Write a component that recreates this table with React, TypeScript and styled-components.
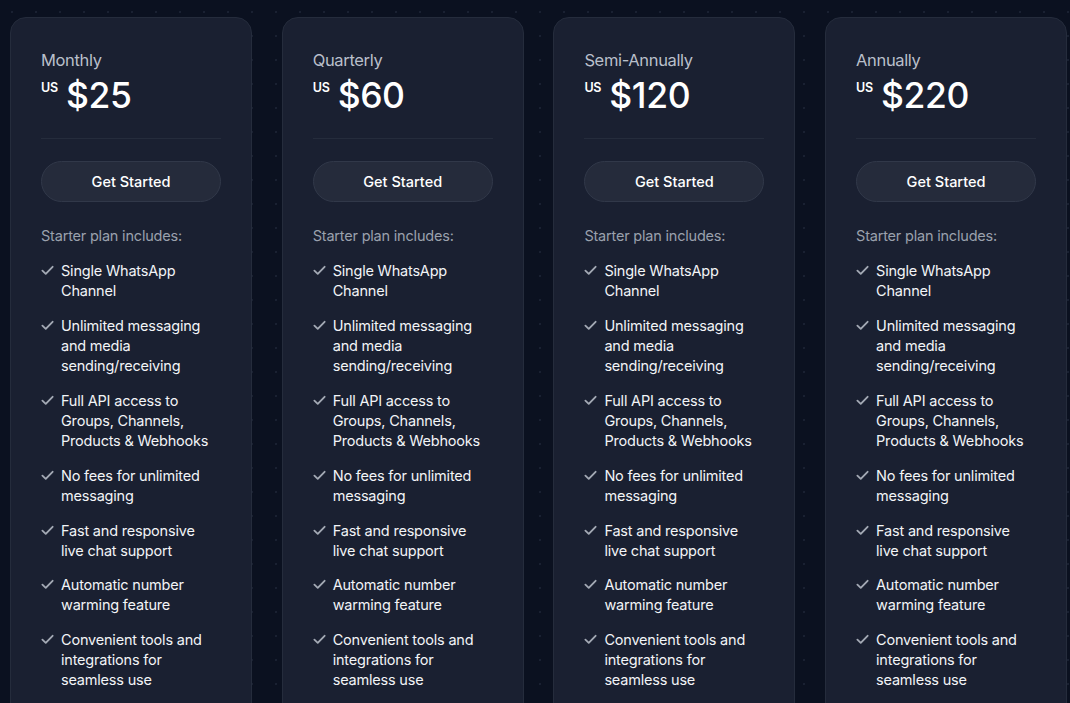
import React from 'react';
import styled, { createGlobalStyle } from 'styled-components';

const GlobalStyle = createGlobalStyle`
  html, body {
    margin: 0;
    padding: 0;
    background: #0b1120;
  }
  body {
    font-family: 'Inter', 'Noto Sans', sans-serif;
    -webkit-font-smoothing: antialiased;
  }
`;

// #region -- Styled components
const Page = styled.main`
  min-height: 703px;
  padding: 17px 0 0 10px;
  background-color: #0b1120;
  background-image: radial-gradient(rgba(120, 135, 165, 0.13) 1px, transparent 1.4px);
  background-size: 24px 24px;
  box-sizing: border-box;
  overflow: hidden;
`;
Page.displayName = 'Page';

const Grid = styled.div`
  display: grid;
  grid-template-columns: repeat(4, 242px);
  column-gap: 29.7px;
  align-items: start;
`;
Grid.displayName = 'Grid';

const Card = styled.section`
  display: flex;
  flex-direction: column;
  padding: 30px 30px 40px;
  border: 1px solid #252c3c;
  border-radius: 16px;
  background: #1a2031;
`;
Card.displayName = 'Card';

const Period = styled.h3`
  margin: 0;
  font-size: 16.5px;
  line-height: 24px;
  font-weight: 400;
  letter-spacing: -0.35px;
  color: #b9bfca;
`;
Period.displayName = 'Period';

const PriceRow = styled.div`
  display: flex;
  align-items: flex-start;
  gap: 8px;
  margin-top: 4px;
  color: #ffffff;
`;
PriceRow.displayName = 'PriceRow';

const Currency = styled.span`
  margin-top: 5px;
  font-size: 12.5px;
  line-height: 14px;
  font-weight: 600;
  letter-spacing: -0.2px;
`;
Currency.displayName = 'Currency';

const Amount = styled.span`
  font-size: 35.5px;
  line-height: 40px;
  font-weight: 500;
  letter-spacing: -0.4px;
`;
Amount.displayName = 'Amount';

const Divider = styled.hr`
  margin: 22px 0 0;
  border: none;
  border-top: 1px solid #252c3c;
`;
Divider.displayName = 'Divider';

const StartButton = styled.button`
  height: 41px;
  margin-top: 22px;
  border: 1px solid #313849;
  border-radius: 21px;
  background: #252b3b;
  font-family: inherit;
  font-size: 14.5px;
  font-weight: 500;
  color: #ffffff;
  cursor: pointer;
`;
StartButton.displayName = 'StartButton';

const Includes = styled.p`
  margin: 24px 0 0;
  font-size: 14.5px;
  line-height: 20px;
  letter-spacing: -0.2px;
  color: #9aa1ad;
`;
Includes.displayName = 'Includes';

const FeatureList = styled.ul`
  display: flex;
  flex-direction: column;
  gap: 14.9px;
  margin: 15px 0 0;
  padding: 0;
  list-style: none;
`;
FeatureList.displayName = 'FeatureList';

const Feature = styled.li`
  display: flex;
  gap: 7px;
  font-size: 14.5px;
  line-height: 20px;
  letter-spacing: -0.2px;
  color: #f2f4f7;
`;
Feature.displayName = 'Feature';

const CheckIcon = styled.svg`
  flex: none;
  width: 13px;
  height: 13px;
  margin-top: 3px;
`;
CheckIcon.displayName = 'CheckIcon';
// #endregion

const plans = [
  { period: 'Monthly', price: '$25' },
  { period: 'Quarterly', price: '$60' },
  { period: 'Semi-Annually', price: '$120' },
  { period: 'Annually', price: '$220' },
];

const features = [
  'Single WhatsApp Channel',
  'Unlimited messaging and media sending/receiving',
  'Full API access to Groups, Channels, Products & Webhooks',
  'No fees for unlimited messaging',
  'Fast and responsive live chat support',
  'Automatic number warming feature',
  'Convenient tools and integrations for seamless use',
];

function Check() {
  return (
    <CheckIcon viewBox="0 0 14 14" fill="none">
      <path d="M1.5 7.2l3.6 3.4L12.5 3" stroke="#a3a9b4" strokeWidth="2" strokeLinecap="round" strokeLinejoin="round" />
    </CheckIcon>
  );
}

function App() {
  return (
    <>
      <GlobalStyle />
      <Page>
        <Grid>
          {plans.map((plan) => (
            <Card key={plan.period}>
              <Period>{plan.period}</Period>
              <PriceRow>
                <Currency>US</Currency>
                <Amount>{plan.price}</Amount>
              </PriceRow>
              <Divider />
              <StartButton>Get Started</StartButton>
              <Includes>Starter plan includes:</Includes>
              <FeatureList>
                {features.map((f) => (
                  <Feature key={f}>
                    <Check />
                    <span>{f}</span>
                  </Feature>
                ))}
              </FeatureList>
            </Card>
          ))}
        </Grid>
      </Page>
    </>
  );
}

export default App;
